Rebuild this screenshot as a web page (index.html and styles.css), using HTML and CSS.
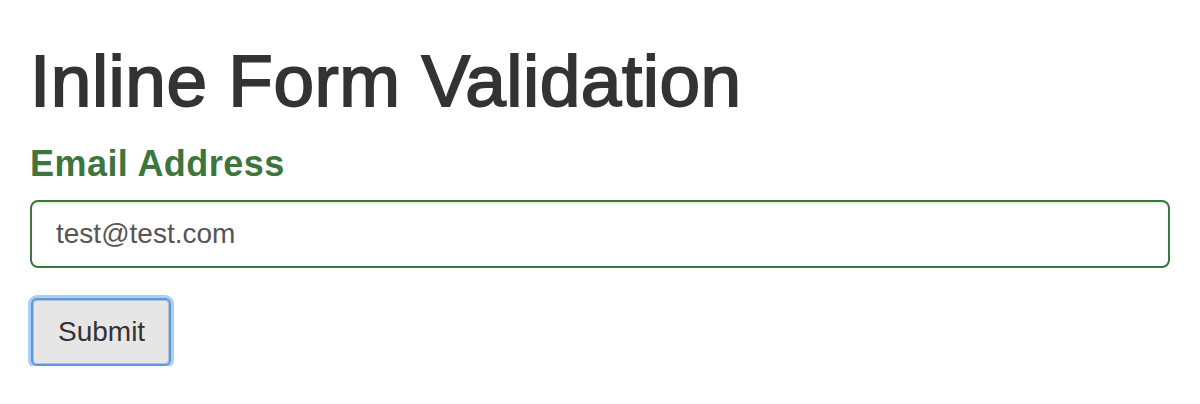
FILE: index.html
```html
<!DOCTYPE html>
<html lang="en">
<head>
<meta charset="utf-8">
<title>Inline Form Validation</title>
<link rel="stylesheet" href="styles.css">
</head>
<body>
<div class="container">
  <h1 class="title">Inline Form Validation</h1>
  <form class="form">
    <div class="form-group has-success">
      <label class="label" for="email">Email Address</label>
      <input class="input" id="email" type="email" value="test@test.com">
    </div>
    <button class="btn" type="button">Submit</button>
  </form>
</div>
</body>
</html>
```

FILE: styles.css
```css
html, body {
  margin: 0;
  padding: 0;
  background: #fff;
}

body {
  font-family: "Liberation Sans", Arial, Helvetica, sans-serif;
  color: #333;
}

.container {
  padding: 0 30px;
}

.title {
  margin: 41px 0 0;
  font-size: 73px;
  line-height: 79px;
  font-weight: 400;
  letter-spacing: 0.5px;
  -webkit-text-stroke: 1.8px #333;
  color: #333;
}

.form {
  margin: 0;
  display: flex;
  flex-direction: column;
  align-items: flex-start;
}

.form-group {
  align-self: stretch;
  margin-top: 24px;
  margin-bottom: 30px;
  display: flex;
  flex-direction: column;
}

.label {
  display: block;
  font-size: 36px;
  line-height: 40px;
  font-weight: 700;
  letter-spacing: 0.45px;
  color: #3c763d;
  margin-bottom: 16px;
}

.input {
  box-sizing: border-box;
  height: 68px;
  width: 100%;
  margin: 0;
  padding: 0 24px;
  border: 2px solid #3c763d;
  border-radius: 8px;
  font-family: "Liberation Sans", Arial, Helvetica, sans-serif;
  font-size: 28px;
  color: #555;
  background: #fff;
  box-shadow: inset 0 2px 2px rgba(0, 0, 0, 0.075);
  outline: none;
}

.btn {
  box-sizing: border-box;
  height: 68px;
  margin: 0 0 0 1px;
  padding: 0 24px 0 25px;
  border: 2px solid #5e97d8;
  border-radius: 6px;
  background: #e6e6e6;
  font-family: "Liberation Sans", Arial, Helvetica, sans-serif;
  font-size: 28px;
  color: #333;
  box-shadow: 0 0 0 3px #a8cff6, inset 0 0 0 1px #b3c1d2;
  cursor: pointer;
}
```
